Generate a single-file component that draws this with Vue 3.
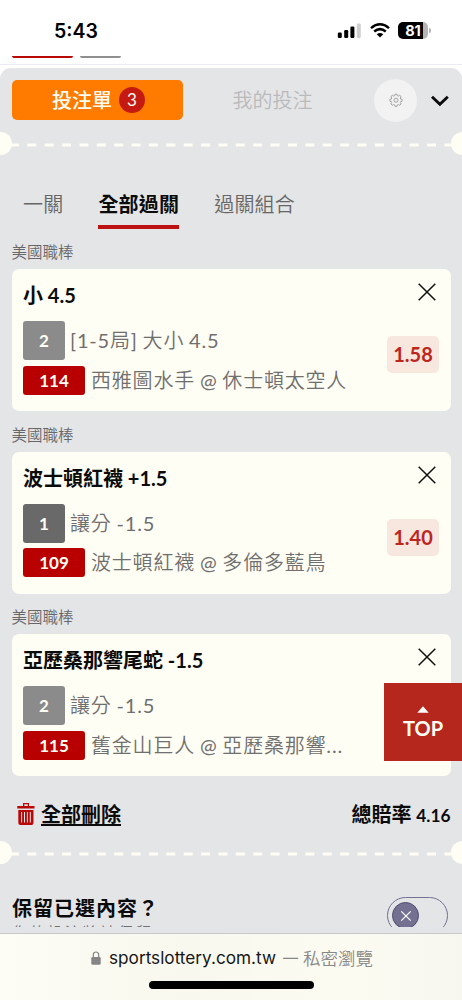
<script setup>
const bets = [
  { id: 1, title: '小 4.5', code: '2', market: '[1-5局] 大小 4.5', no: '114', match: '西雅圖水手 @ 休士頓太空人', odds: '1.58' },
  { id: 2, title: '波士頓紅襪 +1.5', code: '1', dark: true, market: '讓分 -1.5', no: '109', match: '波士頓紅襪 @ 多倫多藍鳥', odds: '1.40' },
  { id: 3, title: '亞歷桑那響尾蛇 -1.5', code: '2', market: '讓分 -1.5', no: '115', match: '舊金山巨人 @ 亞歷桑那響...', odds: '' },
]
</script>

<template>
  <div class="screen">
    <header class="status">
      <span class="time">5:43</span>
      <svg class="signal" width="24" height="16" viewBox="0 0 24 16">
        <rect x="0.8" y="9.6" width="4" height="5.4" rx="1.2" />
        <rect x="7.2" y="7" width="4" height="8" rx="1.2" />
        <rect x="13.4" y="3.5" width="4" height="11.5" rx="1.2" />
        <rect x="19.8" y="0.5" width="4" height="14.5" rx="1.2" fill="#cfcfcf" />
      </svg>
      <svg class="wifi" width="20" height="15" viewBox="0 0 20 15" fill="none" stroke="#000" stroke-width="2.5">
        <path d="M1 5.1Q10-2.5 19 5.1" />
        <path d="M4.2 8.5Q10 3.7 15.8 8.5" />
        <path d="M10 14.6L6.7 11.3Q10 8.6 13.3 11.3Z" fill="#000" stroke="none" />
      </svg>
      <span class="battery">81</span>
      <span class="cap"></span>
      <i class="stub red"></i><i class="stub grey"></i>
    </header>

    <main class="panel">
      <div class="top">
        <button class="slip">投注單<b>3</b></button>
        <span class="mine">我的投注</span>
        <span class="gear">
          <svg width="14" height="14" viewBox="0 0 14 14" fill="none" stroke="#999" stroke-width="0.9" stroke-linejoin="round">
            <path d="M6 1.2h2l.4 1.5 1 .4 1.3-.8 1.4 1.4-.8 1.3.4 1 1.4.3v1.9l-1.4.4-.4 1 .8 1.3-1.4 1.4-1.3-.8-1 .4-.4 1.4H6l-.4-1.4-1-.4-1.3.8-1.4-1.4.8-1.3-.4-1-1.4-.4V6.3L2.300 6l.4-1-.8-1.300L3.300 2.300l1.300.8 1-.4z" />
            <circle cx="7" cy="7.2" r="2" />
          </svg>
        </span>
        <svg class="chev" width="20" height="14" viewBox="0 0 20 14" fill="none" stroke="#0b0b0b" stroke-width="2.9">
          <path d="M2 2.700L9.900 10.300L17.800 2.700" />
        </svg>
      </div>

      <div class="perf"><svg width="462" height="4"><path d="M9.900 2H452" stroke="#fffef4" stroke-width="3" stroke-dasharray="9 8.380" /></svg></div>

      <nav class="tabs">
        <span>一關</span><span class="on">全部過關</span><span>過關組合</span>
      </nav>

      <section v-for="b in bets" :key="b.id" class="group">
        <div class="league">美國職棒</div>
        <article class="card">
          <div class="info">
            <h3>{{ b.title }}</h3>
            <div class="row r1"><span class="code" :class="{ dark: b.dark }">{{ b.code }}</span><span>{{ b.market }}</span></div>
            <div class="row r2"><span class="no">{{ b.no }}</span><span>{{ b.match }}</span></div>
          </div>
          <div class="side">
            <svg width="18" height="18" viewBox="0 0 18 18" stroke="#111" stroke-width="1.5"><path d="M.7.7L17.300 17.300M17.300.7L.7 17.300" /></svg>
            <span v-if="b.odds" class="odds">{{ b.odds }}</span>
          </div>
        </article>
      </section>

      <div class="sum">
        <svg width="18" height="22" viewBox="0 0 18 22" fill="#b80808">
          <path d="M6 0h6v3h5.500v2.500H.3V3H6zM7.300 1.300V3h3.500V1.300z" fill-rule="evenodd" />
          <path d="M1.300 7h15.200v13q0 2-2 2H3.300q-2 0-2-2z" />
          <path d="M4.600 9v10.500M7.500 9v10.500M10.400 9v10.500M13.300 9v10.500" stroke="#e4e5e7" stroke-width="1" />
        </svg>
        <span class="del">全部刪除</span>
        <span class="total">總賠率 <em>4.16</em></span>
      </div>

      <div class="perf"><svg width="462" height="4"><path d="M9.900 2H452" stroke="#fffef4" stroke-width="3" stroke-dasharray="9 8.380" /></svg></div>

      <div class="keep">
        <div>
          <div class="q">保留已選內容？</div>
          <div class="hint">您的投注將被保留</div>
        </div>
        <span class="switch"><span class="knob"><svg width="12" height="12" viewBox="0 0 12 12" stroke="#fff" stroke-width="1.200"><path d="M1.300 1.300l9.400 9.400M10.700 1.300l-9.400 9.400" /></svg></span></span>
      </div>
    </main>

    <div class="totop">
      <svg width="12" height="7" viewBox="0 0 12 7"><path d="M6 .3L11.700 6.700H.3z" fill="#fff" /></svg>
      <span>TOP</span>
    </div>

    <footer class="browser">
      <div class="url">
        <svg width="10" height="14" viewBox="0 0 10 14"><rect x="0.300" y="6" width="9.400" height="7.700" rx="1.300" fill="#858585" /><path d="M2.300 6.500V4q0-3 2.700-3t2.700 3v2.500" fill="none" stroke="#858585" stroke-width="1.200" /></svg>
        <span class="host">sportslottery.com.tw</span><span class="dash">—</span><span class="priv">私密瀏覽</span>
      </div>
      <div class="home"></div>
    </footer>
  </div>
</template>

<style>
body { background: #fff; overflow: hidden; }
</style>

<style scoped>
* { box-sizing: border-box; }
.screen { position: relative; width: 462px; height: 1000px; overflow: hidden; background: #fff; font-family: Lato, "Noto Sans CJK TC DemiLight", "Noto Sans CJK TC", sans-serif; color: #0b0b0b; white-space: nowrap; }
svg { display: block; flex: none; }
.status { position: relative; display: flex; height: 65px; border-bottom: 1px solid #ebebf4; }
.time { width: 337px; padding-left: 54px; padding-top: 19px; font: 600 19.500px/24px Inter, sans-serif; color: #000; }
.signal { margin-top: 23px; }
.wifi { margin: 23px 0 0 9px; }
.battery { margin: 22px 0 0 8px; width: 30px; height: 17px; border-radius: 5px; background: linear-gradient(90deg, #000 25px, #b5b5b5 25px); color: #fff; font: 700 14.500px/17px Inter, sans-serif; text-align: center; }
.cap { width: 2px; height: 5px; margin: 28px 0 0 1px; border-radius: 0 3px 3px 0; background: #b5b5b5; }
.stub { position: absolute; top: 56px; height: 2px; border-radius: 0 0 3px 3px; }
.stub.red { left: 12px; width: 61px; background: #b80808; }
.stub.grey { left: 80px; width: 41px; background: #8f8f8f; }
.panel { margin-top: 3px; height: 859px; overflow: hidden; background: #e4e5e7; border-radius: 11px 11px 0 0; }
.top { display: flex; align-items: center; height: 64px; padding-left: 11.500px; }
.slip { display: flex; align-items: center; justify-content: center; gap: 7px; width: 171px; height: 40px; padding: 0 0 0 3px; border: 0; border-radius: 5px; background: #ff7b00; color: #fffef4; font: 500 20px/40px Lato, "Noto Sans CJK TC", sans-serif; }
.slip b { width: 26px; height: 26px; border-radius: 50%; background: #c51a12; font: 400 17px/26px Lato, sans-serif; text-align: center; }
.mine { width: 141.500px; margin-left: 50px; font-size: 20px; line-height: 40px; font-weight: 400; color: #b9babb; }
.gear { display: flex; align-items: center; justify-content: center; width: 43px; height: 43px; border-radius: 50%; background: #f2f2f2; }
.chev { margin: 2px 0 0 13px; }
.perf { position: relative; display: flex; align-items: center; height: 23px; padding-top: 2px; }
.perf::before, .perf::after { content: ""; position: absolute; top: 0; width: 23px; height: 23px; border-radius: 50%; background: #fffef4; }
.perf::before { left: -11.500px; }
.perf::after { right: -11.500px; }
.tabs { display: flex; gap: 35px; height: 84px; padding: 26px 0 0 23px; font-size: 20px; line-height: 46px; color: #666; }
.tabs span { height: 48px; letter-spacing: .2px; font-weight: 400; }
.tabs .on { border-bottom: 4px solid #be1111; color: #0b0b0b; font-weight: 700; font-family: Lato, "Noto Sans CJK TC", sans-serif; }
.group { padding: 0 11.500px; height: 182.500px; }
.league { height: 30px; font-size: 15.500px; line-height: 26px; color: #676767; font-weight: 400; }
.card { display: flex; height: 142px; border-radius: 7px; background: #fffef4; padding-left: 11.500px; }
.info { flex: 1; }
h3, .sum, .q { font-family: Lato, "Noto Sans CJK TC", sans-serif; }
h3 { margin: 0; height: 52px; font-size: 20px; line-height: 52px; font-weight: 700; }
.row { display: flex; color: #6f6f6f; font-size: 20px; font-weight: 400; letter-spacing: .8px; word-spacing: -1px; }
.r1 { height: 39px; line-height: 39px; gap: 5px; }
.r2 { height: 29px; line-height: 29px; margin-top: 5.500px; gap: 6px; }
.code, .no { border-radius: 3px; color: #fffef4; font-weight: 700; font-size: 17px; letter-spacing: 0; text-align: center; }
.code { width: 42px; background: #8b8b8b; }
.code.dark { background: #696969; }
.no { width: 62px; background: #b80000; }
.side { display: flex; flex-direction: column; align-items: flex-end; width: 63px; padding: 14px 11.500px 0 0; }
.side svg { margin-right: 3.500px; }
.odds { width: 52px; height: 37px; margin-top: 35px; border-radius: 5px; background: #f8e7df; color: #bd261d; font-size: 20px; font-weight: 700; line-height: 37px; text-align: center; }
.sum { display: flex; align-items: center; height: 54.500px; padding: 0 11.500px 0 17px; font-size: 20px; font-weight: 700; }
.del { margin-left: 6px; text-decoration: underline; text-decoration-thickness: 1.500px; text-underline-offset: 2px; }
.total { margin-left: auto; }
.total em { font-style: normal; font-size: 17.300px; }
.keep { display: flex; justify-content: space-between; height: 63px; padding: 33px 14px 0 12px; }
.q { font-size: 20px; line-height: 22px; font-weight: 700; letter-spacing: 1px; }
.hint { font-size: 16px; line-height: 20px; margin-top: 4px; letter-spacing: 1.600px; color: #6f6f6f; }
.switch { width: 61px; height: 37px; padding: 4px; border: 1.500px solid #747092; border-radius: 19px; }
.knob { display: flex; align-items: center; justify-content: center; width: 27px; height: 27px; border: 1.500px solid #4e4b70; border-radius: 50%; background: #747092; }
.totop { position: absolute; left: 384px; top: 682.500px; width: 78px; height: 78px; display: flex; flex-direction: column; align-items: center; padding-top: 23px; background: #b5271d; color: #fffef4; font-size: 20px; font-weight: 700; line-height: 31px; }
.browser { height: 73px; margin-top: 6px; position: relative; border-top: 1px solid #c8c8c8; background: linear-gradient(90deg, #fdfcf5, #f9f8ee 40%, #fcfbf2 75%, #f8f7ef); }
.browser::before { content: ""; position: absolute; left: 0; right: 0; top: -7px; height: 6px; background: #e3e4e7; }
.url { display: flex; align-items: center; height: 47px; padding-left: 91px; font-size: 17.500px; color: #888; }
.host { margin-left: 8px; color: #161616; font: 400 17.200px/24px Inter, sans-serif; }
.dash { margin: 0 5px 0 7px; font: 400 15px/24px Inter, sans-serif; }
.home { width: 165px; height: 8px; margin-left: 148.500px; border-radius: 4px; background: #000; }
</style>
